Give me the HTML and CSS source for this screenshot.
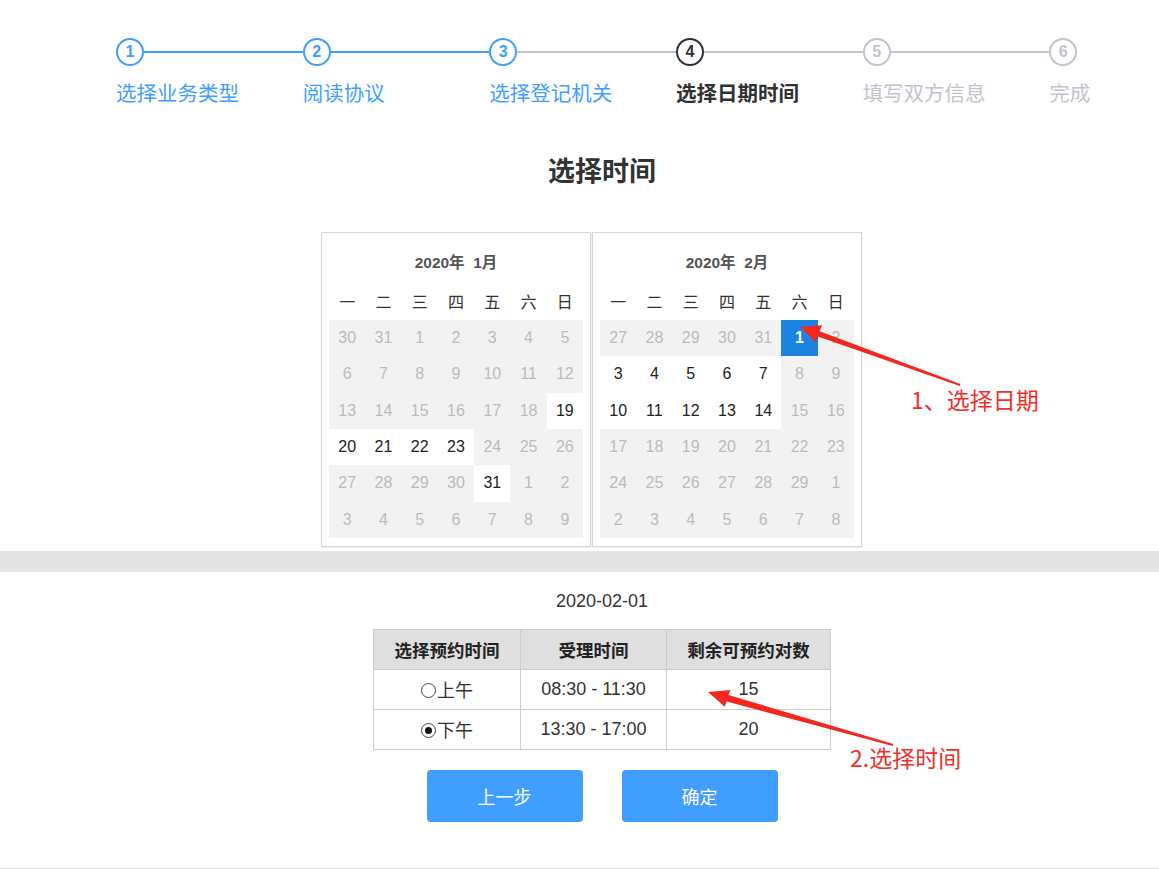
FILE: index.html
```html
<!DOCTYPE html>
<html lang="zh-CN">
<head>
<meta charset="utf-8">
<title>选择日期时间</title>
<link rel="stylesheet" href="styles.css">
</head>
<body>
<div class="page">
  <div class="steps">
    <div class="step done">
      <div class="step-head"><span class="step-icon">1</span><span class="step-line"></span></div>
      <div class="step-title">选择业务类型</div>
    </div>
    <div class="step done">
      <div class="step-head"><span class="step-icon">2</span><span class="step-line"></span></div>
      <div class="step-title">阅读协议</div>
    </div>
    <div class="step done gray-line">
      <div class="step-head"><span class="step-icon">3</span><span class="step-line"></span></div>
      <div class="step-title">选择登记机关</div>
    </div>
    <div class="step active">
      <div class="step-head"><span class="step-icon">4</span><span class="step-line"></span></div>
      <div class="step-title">选择日期时间</div>
    </div>
    <div class="step wait">
      <div class="step-head"><span class="step-icon">5</span><span class="step-line"></span></div>
      <div class="step-title">填写双方信息</div>
    </div>
    <div class="step wait last">
      <div class="step-head"><span class="step-icon">6</span></div>
      <div class="step-title">完成</div>
    </div>
  </div>

  <div class="content">
    <h1 class="title">选择时间</h1>

    <div class="calendars">
      <div class="cal">
        <div class="cal-title">2020年&nbsp;&nbsp;1月</div>
        <div class="cal-week"><span>一</span><span>二</span><span>三</span><span>四</span><span>五</span><span>六</span><span>日</span></div>
        <div class="cal-grid">
          <span class="d">30</span><span class="d">31</span><span class="d">1</span><span class="d">2</span><span class="d">3</span><span class="d">4</span><span class="d">5</span>
          <span class="d">6</span><span class="d">7</span><span class="d">8</span><span class="d">9</span><span class="d">10</span><span class="d">11</span><span class="d">12</span>
          <span class="d">13</span><span class="d">14</span><span class="d">15</span><span class="d">16</span><span class="d">17</span><span class="d">18</span><span class="a">19</span>
          <span class="a">20</span><span class="a">21</span><span class="a">22</span><span class="a">23</span><span class="d">24</span><span class="d">25</span><span class="d">26</span>
          <span class="d">27</span><span class="d">28</span><span class="d">29</span><span class="d">30</span><span class="a">31</span><span class="d">1</span><span class="d">2</span>
          <span class="d">3</span><span class="d">4</span><span class="d">5</span><span class="d">6</span><span class="d">7</span><span class="d">8</span><span class="d">9</span>
        </div>
      </div>
      <div class="cal">
        <div class="cal-title">2020年&nbsp;&nbsp;2月</div>
        <div class="cal-week"><span>一</span><span>二</span><span>三</span><span>四</span><span>五</span><span>六</span><span>日</span></div>
        <div class="cal-grid">
          <span class="d">27</span><span class="d">28</span><span class="d">29</span><span class="d">30</span><span class="d">31</span><span class="s">1</span><span class="d">2</span>
          <span class="a">3</span><span class="a">4</span><span class="a">5</span><span class="a">6</span><span class="a">7</span><span class="d">8</span><span class="d">9</span>
          <span class="a">10</span><span class="a">11</span><span class="a">12</span><span class="a">13</span><span class="a">14</span><span class="d">15</span><span class="d">16</span>
          <span class="d">17</span><span class="d">18</span><span class="d">19</span><span class="d">20</span><span class="d">21</span><span class="d">22</span><span class="d">23</span>
          <span class="d">24</span><span class="d">25</span><span class="d">26</span><span class="d">27</span><span class="d">28</span><span class="d">29</span><span class="d">1</span>
          <span class="d">2</span><span class="d">3</span><span class="d">4</span><span class="d">5</span><span class="d">6</span><span class="d">7</span><span class="d">8</span>
        </div>
      </div>
    </div>
  </div>

  <div class="band"></div>

  <div class="content lower">
    <div class="date">2020-02-01</div>
    <table class="slots">
      <thead>
        <tr><th class="c1">选择预约时间</th><th class="c2">受理时间</th><th class="c3">剩余可预约对数</th></tr>
      </thead>
      <tbody>
        <tr><td><span class="radio"></span>上午</td><td>08:30 - 11:30</td><td>15</td></tr>
        <tr><td><span class="radio checked"></span>下午</td><td>13:30 - 17:00</td><td>20</td></tr>
      </tbody>
    </table>
    <div class="buttons">
      <button class="btn">上一步</button>
      <button class="btn">确定</button>
    </div>
  </div>
  <div class="footer-line"></div>

  <svg class="annot" width="1159" height="869" viewBox="0 0 1159 869" aria-hidden="true">
    <polygon fill="#f2281e" points="800,327 821.9,325.3 819.6,331.2 960.3,384.1 959.7,385.9 817.9,336.4 815.7,342.3"/>
    <polygon fill="#f2281e" points="708,692 730.4,689.9 728.4,695.0 893.3,744.0 892.7,746.0 726.6,701.6 724.7,706.7"/>
  </svg>
  <div class="note note1">1、选择日期</div>
  <div class="note note2">2.选择时间</div>
</div>
</body>
</html>
```

FILE: styles.css
```css
html, body {
  margin: 0;
  padding: 0;
  background: #fff;
}
body {
  font-family: "Liberation Sans", "Noto Sans CJK SC", sans-serif;
  color: #333;
}
.page {
  position: relative;
  width: 1159px;
  height: 869px;
  overflow: hidden;
}

/* steps */
.steps {
  display: flex;
  padding-top: 38px;
  margin-left: 116px;
}
.step {
  width: 186.67px;
  flex: none;
}
.step.last { width: 80px; }
.step-head {
  display: flex;
  align-items: center;
  height: 28px;
}
.step-icon {
  box-sizing: border-box;
  width: 28px;
  height: 28px;
  border: 2px solid currentColor;
  border-radius: 50%;
  display: flex;
  align-items: center;
  justify-content: center;
  font-size: 16px;
  font-weight: bold;
  flex: none;
  background: #fff;
}
.step-line {
  flex: 1;
  height: 2px;
  background: #c0c4cc;
}
.step-title {
  margin-top: 12px;
  font-size: 20.5px;
  line-height: 28px;
  white-space: nowrap;
  font-family: "Noto Sans CJK SC", sans-serif;
}
.step.done { color: #409eff; }
.step.done .step-line { background: #409eff; }
.step.done.gray-line .step-line { background: #c0c4cc; }
.step.active { color: #303133; }
.step.active .step-title { font-weight: bold; }
.step.wait { color: #c0c4cc; }

/* content */
.content {
  padding-left: 45px;
  display: flex;
  flex-direction: column;
  align-items: center;
}
.title {
  margin: 46px 0 0;
  font-size: 27px;
  line-height: 36px;
  font-weight: bold;
  color: #333;
  font-family: "Noto Sans CJK SC", sans-serif;
}

.calendars {
  display: flex;
  gap: 1px;
  margin-top: 44px;
  margin-right: 21px;
}
.cal {
  box-sizing: border-box;
  width: 270px;
  border: 1px solid #d6d6d6;
  padding: 18px 7px 8px;
  box-shadow: 0 1px 2px rgba(0, 0, 0, 0.08);
  background: #fff;
}
.cal-title {
  text-align: center;
  font-size: 15.5px;
  line-height: 24px;
  font-weight: bold;
  color: #555;
}
.cal-week {
  margin-top: 6px;
  display: grid;
  grid-template-columns: repeat(7, 1fr);
  height: 39px;
  align-items: center;
  font-size: 16px;
  font-family: "Noto Sans CJK SC", sans-serif;
  color: #333;
  text-align: center;
}
.cal-grid {
  display: grid;
  grid-template-columns: repeat(7, 1fr);
  grid-auto-rows: 36.33px;
  font-size: 16px;
}
.cal-grid span {
  display: flex;
  align-items: center;
  justify-content: center;
}
.cal-grid .d {
  background: #f2f2f2;
  color: #bbb;
}
.cal-grid .a {
  background: #fff;
  color: #222;
}
.cal-grid .s {
  background: #1a84e0;
  color: #fff;
  font-weight: bold;
}

.band {
  margin-top: 4px;
  height: 21px;
  background: #e4e4e4;
}

.date {
  margin-top: 17px;
  font-size: 18px;
  line-height: 24px;
  color: #333;
}
.slots {
  margin-top: 16px;
  border-collapse: collapse;
  font-size: 18px;
  color: #333;
}
.slots th, .slots td {
  border: 1px solid #ccc;
  text-align: center;
  padding: 0;
}
.slots th {
  background: #dfdfdf;
  font-weight: bold;
  height: 39px;
  color: #222;
  font-size: 17.5px;
  font-family: "Noto Sans CJK SC", sans-serif;
}
.slots td {
  height: 39px;
}
.slots .c1 { width: 146px; }
.slots .c2 { width: 145px; }
.slots .c3 { width: 163px; }
.radio {
  display: inline-block;
  box-sizing: border-box;
  width: 15px;
  height: 15px;
  border: 1px solid #444;
  border-radius: 50%;
  vertical-align: -1px;
  margin-right: 1px;
  position: relative;
}
.radio.checked::after {
  content: "";
  position: absolute;
  left: 3px;
  top: 3px;
  width: 7px;
  height: 7px;
  border-radius: 50%;
  background: #111;
}

.buttons {
  display: flex;
  gap: 39px;
  margin-top: 20px;
}
.btn {
  width: 156px;
  height: 52px;
  border: none;
  border-radius: 4px;
  background: #409eff;
  color: #fff;
  font-size: 18px;
  font-family: "Noto Sans CJK SC", sans-serif;
  padding: 0;
}
.footer-line {
  margin-top: 46px;
  border-top: 1px solid #e0e0e0;
}

/* annotations */
.annot {
  position: absolute;
  left: 0;
  top: 0;
  pointer-events: none;
}
.note {
  position: absolute;
  color: #f0302a;
  font-size: 23px;
  line-height: 30px;
  font-family: "Noto Sans CJK SC", sans-serif;
  white-space: nowrap;
}
.note1 { left: 911px; top: 384px; }
.note2 { left: 850px; top: 742px; }
```
